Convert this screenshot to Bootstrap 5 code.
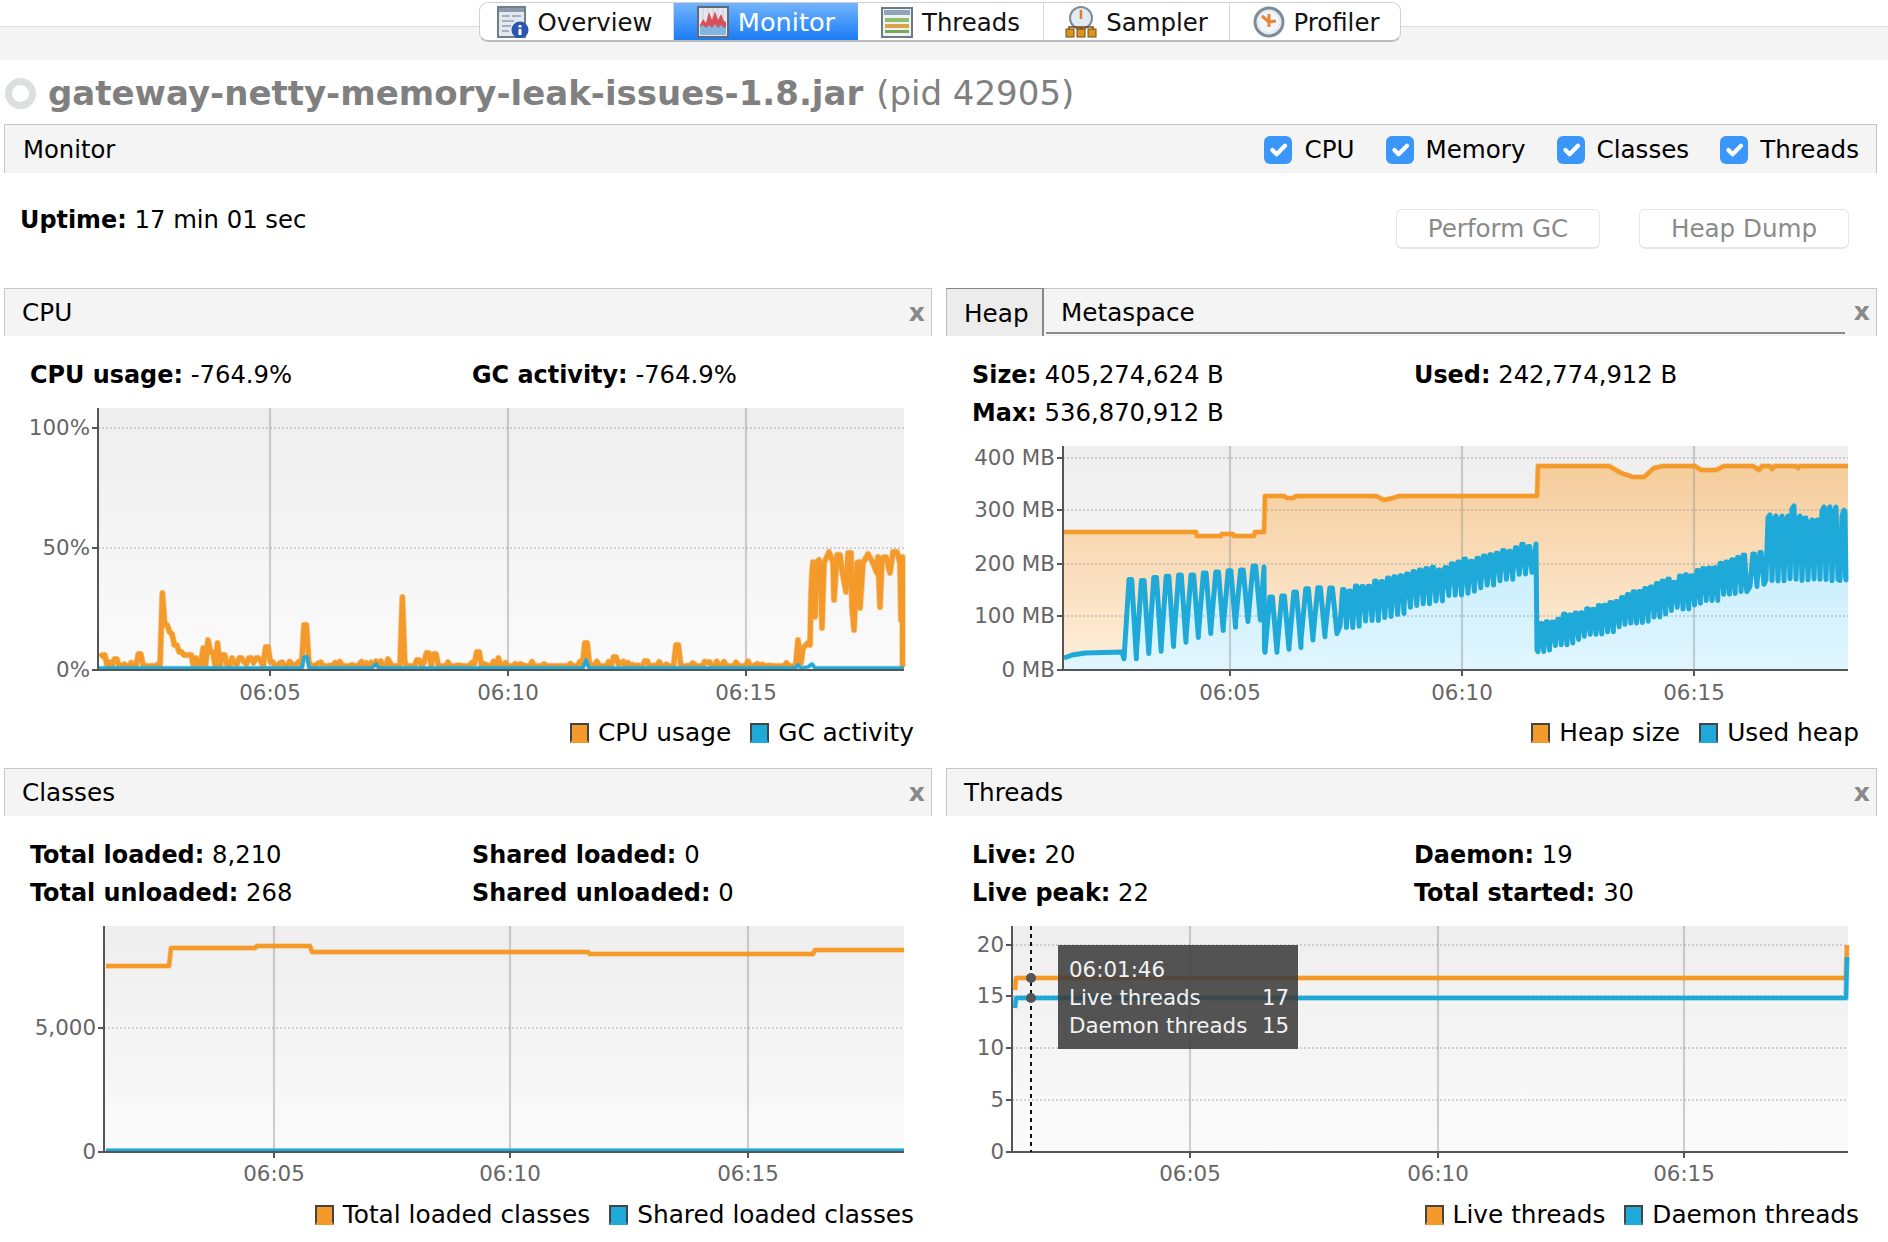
<!DOCTYPE html>
<html lang="en">
<head>
<meta charset="utf-8">
<title>VisualVM Monitor</title>
<link href="https://cdn.jsdelivr.net/npm/bootstrap@5.3.0/dist/css/bootstrap.min.css" rel="stylesheet">
<style>
html,body{height:100%}
body{font-family:"DejaVu Sans","Liberation Sans",sans-serif;font-size:24.3px;color:#000;background:#fff;overflow:hidden}
.strip{height:60px;padding-right:8px;background:linear-gradient(#fff 26px,#dcdcdc 26px,#dcdcdc 27px,#f4f4f4 27px)}
.strip-tabs{display:grid;grid-template-columns:194px 184px 186px 186px 172px;width:922px;height:40px;margin-top:2px;background:#fff;border:1px solid #d0d0d0;border-bottom:2px solid #bcbcbc;border-radius:9px;overflow:hidden}
.strip-tab{display:flex;align-items:center;justify-content:center;gap:9px;border-right:1px solid #d8d8d8;font-size:24.4px;line-height:1;color:#111;white-space:nowrap;padding-top:3px}
.strip-tab.first{padding-right:4px}
.strip-tab svg{margin-top:-3px}
.strip-tab:last-child{border-right:0}
.strip-tab.on{background:linear-gradient(#72b4fd,#1a7cf6);color:#fff;border-right:0}
.strip-tab.on span{font-size:25.6px}
.app-title{height:64px;color:#808080;font-size:34px;white-space:nowrap;padding:2px 0 0 5px}
.app-title .pid{margin-left:13px}
.ring{width:31px;height:31px;border-radius:50%;border:7px solid #dcdedf;background:#fff;margin-right:12px;flex:none}
.mon-head{height:49px;margin:0 11px 0 4px;background:#f4f4f4;border:1px solid #c6c6c6;border-bottom:0;padding:2px 17px 0 18px}
.mon-checks{margin-top:1px}
.mon-check{gap:12px;margin:0 0 0 31px;padding:0;font-size:24.6px;min-height:0}
.mon-check .form-check-input{--bs-form-check-bg-image:url("data:image/svg+xml,%3csvg xmlns='http://www.w3.org/2000/svg' viewBox='0 0 28 28'%3e%3cpath fill='none' stroke='%23fff' stroke-width='2' d='M9.5 15l3.5 6 5-14'/%3e%3c/svg%3e");width:28px;height:28px;margin:0;float:none;border:0;border-radius:6px;background-color:#3a97f9;background-size:28px;opacity:1}
.uptime{height:115px;padding:26px 39px 0 20px}
.uptime-text{margin-top:3px}
.uptime-text b{font-size:23.9px}
.act-wrap{margin-top:10px;gap:39px}
.act-btn{width:204px;height:40px;padding:2px 0 0;font-size:24.6px;line-height:1;color:#8a8a8a;background:#fff;border:1px solid #e6e6e6;border-bottom:2px solid #e2e2e2;border-radius:6px}
.act-btn.wide{width:210px}
.act-btn:disabled{color:#8a8a8a;background:#fff;border-color:#e6e6e6;opacity:1}
.panels{display:grid;grid-template-columns:928px 931px;grid-template-rows:480px 474px;column-gap:14px;padding-left:4px}
.pn-head{height:48px;background:#f4f4f4;border:1px solid #c6c6c6;border-bottom:0;padding:2px 6px 0 17px;line-height:1;font-size:24.7px}
.pn-x{color:#8a8a8a;font-weight:700;font-size:25px;line-height:1;margin-top:-3px}
.pn-tabs{padding:0 6px 0 0;align-items:stretch}
.pn-tab{display:flex;align-items:center;padding:3px 17px 0}
.pn-tab.sel{width:98px;margin-left:-1px;background:#ececec;border-left:1px solid #bbb;border-right:2px solid #888;border-top:1px solid #888;margin-top:-1px}
.pn-fill{border-bottom:2px solid #8c8c8c;margin:0 0 2px 2px;padding:6px 15px 0}
.pn-x-wrap{display:flex;align-items:center;padding-left:9px}
.stats{padding:20px 0 0 26px;display:grid;grid-template-columns:442px 1fr;line-height:38px;white-space:nowrap}
.stats b{font-weight:700;font-size:23.9px}
.plot{display:block}
.legend{height:46px;padding-right:18px;gap:19px;white-space:nowrap;font-size:24.8px}
.legend-item{gap:9px}
.sw{width:19px;height:20px;border:2px solid #444;border-bottom-width:3px;flex:none}
.sw.o{background:#f39a2b;border-bottom-color:#f39a2b}
.sw.b{background:#1fa9d9;border-bottom-color:#1fa9d9}
.plot text{font-family:"DejaVu Sans","Liberation Sans",sans-serif;font-size:21.4px}
</style>
</head>
<body>
<div class="strip d-flex justify-content-center">
  <div class="strip-tabs">
    <div class="strip-tab first">
      <svg width="32" height="32" viewBox="0 0 32 32"><rect x="1" y="1" width="27" height="30" fill="#e3e9ef" stroke="#6f7f8e" stroke-width="2"/><rect x="2" y="2" width="25" height="4" fill="#8a9bab"/><path d="M5 10h8M15 10h9M5 15h12M5 20h9M5 25h7" stroke="#a3b2c0" stroke-width="2"/><circle cx="23" cy="24" r="8.5" fill="#2a55b0"/><rect x="21.5" y="23" width="3" height="6" fill="#fff"/><rect x="21.5" y="19" width="3" height="2.5" fill="#fff"/></svg>
      <span>Overview</span>
    </div>
    <div class="strip-tab on">
      <svg width="32" height="32" viewBox="0 0 32 32"><rect x="1" y="1" width="30" height="30" fill="#e4e7ec" stroke="#5d6c7c" stroke-width="2"/><path d="M6 2v28M11 2v28M16 2v28M21 2v28M26 2v28" stroke="#c8ced6"/><path d="M3 19l3-6 3 4 3-11 3 8 3-9 3 9 3-6 3 7 2 1v6H3z" fill="#d8515a"/><path d="M3 29v-8l3-2 3 3 3-3 3 3 3-4 3 4 3-3 3 3 2-1v8z" fill="#7fb6e2"/></svg>
      <span>Monitor</span>
    </div>
    <div class="strip-tab">
      <svg width="32" height="32" viewBox="0 0 32 32"><rect x="1" y="2" width="30" height="29" fill="#eef2f5" stroke="#6b7a88" stroke-width="2"/><rect x="3" y="4" width="26" height="5" fill="#8fa4b8"/><rect x="4" y="12" width="24" height="4" fill="#8bbf6a"/><rect x="4" y="18" width="24" height="4" fill="#d9a441"/><rect x="4" y="24" width="24" height="3" fill="#7ba65a"/></svg>
      <span>Threads</span>
    </div>
    <div class="strip-tab">
      <svg width="32" height="32" viewBox="0 0 32 32"><circle cx="16" cy="12" r="11" fill="#e3ebf2" stroke="#7f8c98" stroke-width="2"/><path d="M16 4v9" stroke="#e07b32" stroke-width="2.5"/><path d="M4 24v-3h24v3M16 21v3" fill="none" stroke="#7a4a10" stroke-width="1.5"/><rect x="1" y="23" width="8" height="8" fill="#d8951f" stroke="#7a4a10"/><rect x="12" y="23" width="8" height="8" fill="#d8951f" stroke="#7a4a10"/><rect x="23" y="23" width="8" height="8" fill="#d8951f" stroke="#7a4a10"/></svg>
      <span>Sampler</span>
    </div>
    <div class="strip-tab">
      <svg width="32" height="32" viewBox="0 0 32 32"><circle cx="16" cy="16" r="14" fill="#e4edf5" stroke="#7f8c98" stroke-width="3"/><circle cx="16" cy="16" r="10" fill="#f2f6fa"/><path d="M9 10l7 6M16 8v8l7-1M16 16v5" fill="none" stroke="#e8833a" stroke-width="3"/></svg>
      <span>Profiler</span>
    </div>
  </div>
</div>

<div class="app-title d-flex align-items-center">
  <span class="ring"></span><b>gateway-netty-memory-leak-issues-1.8.jar</b><span class="pid">(pid 42905)</span>
</div>

<div class="mon-head d-flex align-items-center justify-content-between">
  <span>Monitor</span>
  <div class="mon-checks d-flex align-items-center">
    <label class="form-check mon-check d-flex align-items-center"><input class="form-check-input" type="checkbox" checked><span>CPU</span></label>
    <label class="form-check mon-check d-flex align-items-center"><input class="form-check-input" type="checkbox" checked><span>Memory</span></label>
    <label class="form-check mon-check d-flex align-items-center"><input class="form-check-input" type="checkbox" checked><span>Classes</span></label>
    <label class="form-check mon-check d-flex align-items-center"><input class="form-check-input" type="checkbox" checked><span>Threads</span></label>
  </div>
</div>

<div class="uptime d-flex justify-content-between align-items-start">
  <div class="uptime-text"><b>Uptime:</b> 17 min 01 sec</div>
  <div class="d-flex act-wrap">
    <button class="btn act-btn" type="button" disabled>Perform GC</button>
    <button class="btn act-btn wide" type="button" disabled>Heap Dump</button>
  </div>
</div>

<div class="panels">
  <section>
    <div class="pn-head d-flex align-items-center justify-content-between"><span>CPU</span><span class="pn-x">x</span></div>
    <div class="stats"><div><b>CPU usage:</b> -764.9%</div><div><b>GC activity:</b> -764.9%</div></div>
    <svg class="plot" id="c1"></svg>
    <div class="legend d-flex justify-content-end align-items-center">
      <div class="legend-item d-flex align-items-center"><i class="sw o"></i><span>CPU usage</span></div>
      <div class="legend-item d-flex align-items-center"><i class="sw b"></i><span>GC activity</span></div>
    </div>
  </section>
  <section>
    <div class="pn-head pn-tabs d-flex">
      <div class="pn-tab sel">Heap</div>
      <div class="pn-tab pn-fill flex-grow-1">Metaspace</div>
      <div class="pn-x-wrap"><span class="pn-x">x</span></div>
    </div>
    <div class="stats"><div><b>Size:</b> 405,274,624 B</div><div><b>Used:</b> 242,774,912 B</div><div><b>Max:</b> 536,870,912 B</div></div>
    <svg class="plot" id="c2"></svg>
    <div class="legend d-flex justify-content-end align-items-center">
      <div class="legend-item d-flex align-items-center"><i class="sw o"></i><span>Heap size</span></div>
      <div class="legend-item d-flex align-items-center"><i class="sw b"></i><span>Used heap</span></div>
    </div>
  </section>
  <section>
    <div class="pn-head d-flex align-items-center justify-content-between"><span>Classes</span><span class="pn-x">x</span></div>
    <div class="stats"><div><b>Total loaded:</b> 8,210</div><div><b>Shared loaded:</b> 0</div><div><b>Total unloaded:</b> 268</div><div><b>Shared unloaded:</b> 0</div></div>
    <svg class="plot" id="c3"></svg>
    <div class="legend d-flex justify-content-end align-items-center">
      <div class="legend-item d-flex align-items-center"><i class="sw o"></i><span>Total loaded classes</span></div>
      <div class="legend-item d-flex align-items-center"><i class="sw b"></i><span>Shared loaded classes</span></div>
    </div>
  </section>
  <section>
    <div class="pn-head d-flex align-items-center justify-content-between"><span>Threads</span><span class="pn-x">x</span></div>
    <div class="stats"><div><b>Live:</b> 20</div><div><b>Daemon:</b> 19</div><div><b>Live peak:</b> 22</div><div><b>Total started:</b> 30</div></div>
    <svg class="plot" id="c4"></svg>
    <div class="legend d-flex justify-content-end align-items-center">
      <div class="legend-item d-flex align-items-center"><i class="sw o"></i><span>Live threads</span></div>
      <div class="legend-item d-flex align-items-center"><i class="sw b"></i><span>Daemon threads</span></div>
    </div>
  </section>
</div>

<script src="https://cdn.jsdelivr.net/npm/bootstrap@5.3.0/dist/js/bootstrap.bundle.min.js"></script>
<script>
var O='#f39a2b',B='#1fa9d9';
var seed=7;function R(){seed=(seed*16807)%2147483647;return seed/2147483647;}
function P(a){return a.map(function(p){return p[0].toFixed(1)+','+p[1].toFixed(1)}).join(' ');}
function line(a,c,w){
  return '<polyline points="'+P(a)+'" fill="none" stroke="'+c+'" stroke-opacity=".45" stroke-width="'+(w+1.5)+'" stroke-linejoin="round"/>'+
         '<polyline points="'+P(a)+'" fill="none" stroke="'+c+'" stroke-width="'+w+'" stroke-linejoin="round"/>';
}
function area(a,base,g){
  var s=a.slice();s.push([a[a.length-1][0],base]);s.push([a[0][0],base]);
  return '<polygon points="'+P(s)+'" fill="url(#'+g+')"/>';
}
function defs(id){
  return '<defs><linearGradient id="bg'+id+'" x1="0" y1="0" x2="0" y2="1"><stop offset="0" stop-color="#eeeeee"/><stop offset="1" stop-color="#fbfbfb"/></linearGradient>'+
  '<linearGradient id="fo'+id+'" x1="0" y1="0" x2="0" y2="1"><stop offset="0" stop-color="#f5cd9c"/><stop offset="1" stop-color="#feeedb"/></linearGradient>'+
  '<linearGradient id="fb'+id+'" x1="0" y1="0" x2="0" y2="1"><stop offset="0" stop-color="#bfeafb"/><stop offset="1" stop-color="#e0f6ff"/></linearGradient></defs>';
}
function build(id,cfg){
  var s=document.getElementById(id),x0=cfg.vb[0],y0=cfg.vb[1],w=cfg.vb[2],h=cfg.vb[3];
  s.setAttribute('viewBox',x0+' '+y0+' '+w+' '+h);s.setAttribute('width',w);s.setAttribute('height',h);
  var L=cfg.left,Rr=904+(id=='c2'||id=='c4'?944:0),T=cfg.top,Bt=cfg.bottom,o=defs(id),ly=cfg.lab||22;
  o+='<rect x="'+L+'" y="'+T+'" width="'+(Rr-L)+'" height="'+(Bt-T)+'" fill="url(#bg'+id+')"/>';
  o+=cfg.under||'';
  cfg.xt.forEach(function(t){
    o+='<line x1="'+t[0]+'" x2="'+t[0]+'" y1="'+T+'" y2="'+Bt+'" stroke="#9a9a9a" stroke-opacity=".45" stroke-width="2.2"/>';
    o+='<line x1="'+t[0]+'" x2="'+t[0]+'" y1="'+Bt+'" y2="'+(Bt+6)+'" stroke="#555" stroke-width="2"/>';
    o+='<text x="'+t[0]+'" y="'+(Bt+ly)+'" dominant-baseline="central" text-anchor="middle" fill="#666">'+t[1]+'</text>';
  });
  cfg.yt.forEach(function(t){
    if(t[0]!=Bt)o+='<line x1="'+L+'" x2="'+Rr+'" y1="'+t[0]+'" y2="'+t[0]+'" stroke="#8a8a8a" stroke-opacity=".33" stroke-width="2" stroke-dasharray="2 2"/>';
    o+='<line x1="'+(L-6)+'" x2="'+L+'" y1="'+t[0]+'" y2="'+t[0]+'" stroke="#555" stroke-width="2"/>';
    o+='<text x="'+(L-8)+'" y="'+(t[0]-1)+'" dominant-baseline="central" text-anchor="end" fill="#666">'+t[1]+'</text>';
  });
  o+=cfg.over||'';
  o+='<line x1="'+L+'" x2="'+L+'" y1="'+T+'" y2="'+(Bt+1)+'" stroke="#555" stroke-width="2"/>';
  o+='<line x1="'+L+'" x2="'+Rr+'" y1="'+Bt+'" y2="'+Bt+'" stroke="#555" stroke-width="2"/>';
  o+=cfg.top2||'';
  s.innerHTML=o;
}

/* CPU */
var peaks={100:657,104:655,115:659,140:654,164:593,166:625,170:632,173:634,176:645,180:652,186:655,190:655,196:658,203:648,210:640,212:652,218:643,224:655,232:658,240:658,250:658,258:658,267:647,272:662,305:625,402:597,428:653,434:654,478:652,586:643,614:657,646:661,677:645,381:661,388:659,418:660,498:658};
var cpu=[];
for(var x=100;x<=796;x+=2.4){
  var v=666-(R()<.45?R()*5:0),best=null;
  for(var p in peaks){if(Math.abs(p-x)<2){best=peaks[p];}}
  if(best)v=best;
  cpu.push([x,v]);
}
cpu=cpu.concat([[796,662],[798,640],[801,663],[803,648],[808,643],[810,645],[811,597],[812,573],[813,562],[815,617],[817,562],[819,560],[821,590],[822,628],[824,563],[829,552],[833,562],[834,600],[837,555],[840,555],[842,570],[846,592],[848,553],[851,553],[852,607],[854,630],[857,563],[859,562],[860,608],[863,563],[868,554],[873,563],[877,573],[878,557],[880,607],[882,558],[886,557],[890,573],[893,552],[897,552],[900,563],[901,620],[902.5,557],[902.5,667]]);
var gc=[[99,668],[302,668],[304,657],[307,657],[309,668],[372,668],[376,664],[379,668],[583,668],[586,660],[589,668],[795,668],[798,665],[801,668],[808,667],[812,664],[815,668],[904,668]];
build('c1',{vb:[4,394,928,316],left:98,top:408,bottom:670,
  xt:[[270,'06:05'],[508,'06:10'],[746,'06:15']],
  yt:[[428,'100%'],[548,'50%'],[670,'0%']],
  over:line(cpu,O,5)+line(gc,B,3)});

/* Heap */
var hs=[[1064,532],[1196,532],[1197,536],[1221,536],[1222,534],[1233,534],[1234,536],[1254,536],[1255,532],[1264,532],[1265,496],[1284,496],[1287,498],[1293,498],[1296,496],[1376,496],[1384,500],[1393,498],[1399,496],[1537,496],[1538,466],[1609,466],[1621,473],[1633,477],[1644,477],[1654,468],[1663,466],[1695,466],[1701,470],[1716,470],[1724,466],[1753,466],[1759,470],[1762,466],[1770,466],[1772,469],[1775,466],[1796,466],[1798,468],[1800,466],[1848,466]];
var us=[[1064,658],[1072,655],[1085,653],[1122,652]];
function saw(a,b,per,l0,l1,h0,h1,j){
  for(var x=a;x+per<=b+.1;x+=per){
    var t=(x-a)/(b-a),lo=l0+(l1-l0)*t+R()*j,hi=h0+(h1-h0)*t-R()*j;
    us.push([x,lo]);us.push([x+per*.4,hi]);us.push([x+per*.62,hi]);us.push([x+per,lo]);
  }
}
saw(1124,1262,12.4,657,613,582,567,3);
us.push([1264,567]);us.push([1264.5,650]);
saw(1265,1340,12,652,627,600,585,4);
saw(1340,1535,6.4,625,566,594,546,6);
us.push([1536,544]);us.push([1537,650]);
saw(1538,1750,5.8,648,583,627,557,6);
saw(1750,1768,7,585,582,555,552,2);
var hi=[[1769,515],[1775,516],[1781,516],[1787,516],[1793,506],[1799,516],[1805,518],[1811,520],[1817,520],[1823,507],[1829,507],[1835,507],[1843,510]];
hi.forEach(function(p){us.push([p[0]-3,578+R()*3]);us.push([p[0]-1,p[1]+R()*6]);us.push([p[0]+1,p[1]]);us.push([p[0]+3,578+R()*3]);});
us.push([1845,512]);us.push([1845.5,578]);
var usFill=us.slice();usFill.push([1848,578]);
build('c2',{vb:[946,432,931,278],left:1063,top:446,bottom:670,
  xt:[[1230,'06:05'],[1462,'06:10'],[1694,'06:15']],
  yt:[[458,'400 MB'],[510,'300 MB'],[564,'200 MB'],[616,'100 MB'],[670,'0 MB']],
  under:area(hs,670,'foc2')+area(usFill,670,'fbc2'),
  over:line(hs,O,4)+'<polyline points="'+P(us)+'" fill="none" stroke="'+B+'" stroke-width="5" stroke-linejoin="round"/>'});

/* Classes */
var tl=[[106,966],[169,966],[171,948],[255,948],[257,946],[310,946],[312,952],[588,952],[590,954],[813,954],[815,950],[904,950]];
build('c3',{vb:[4,912,928,280],left:104,top:926,bottom:1152,lab:21,
  xt:[[274,'06:05'],[510,'06:10'],[748,'06:15']],
  yt:[[1028,'5,000'],[1152,'0']],
  over:line(tl,O,4)+line([[106,1150],[904,1150]],B,2.5)});

/* Threads */
var lv=[[1015,990],[1016,978],[1846,978],[1847,945]],dm=[[1015,1008],[1016,998],[1846,998],[1847,957]];
build('c4',{vb:[946,912,931,280],left:1012,top:926,bottom:1152,lab:21,
  xt:[[1190,'06:05'],[1438,'06:10'],[1684,'06:15']],
  yt:[[945,'20'],[996,'15'],[1048,'10'],[1100,'5'],[1152,'0']],
  over:line(lv,O,4)+line(dm,B,4),
  top2:'<line x1="1031" x2="1031" y1="926" y2="1152" stroke="#111" stroke-width="2" stroke-dasharray="4 4"/>'+
  '<circle cx="1031" cy="978" r="5" fill="#555"/><circle cx="1031" cy="998" r="5" fill="#555"/>'+
  '<rect x="1058" y="945" width="240" height="104" fill="#3c3c3c" fill-opacity=".88"/>'+
  '<text x="1069" y="969.5" dominant-baseline="central" fill="#f2f2f2">06:01:46</text>'+
  '<text x="1069" y="997.5" dominant-baseline="central" fill="#f2f2f2">Live threads</text>'+
  '<text x="1262" y="997.5" dominant-baseline="central" fill="#f2f2f2">17</text>'+
  '<text x="1069" y="1025.5" dominant-baseline="central" fill="#f2f2f2">Daemon threads</text>'+
  '<text x="1262" y="1025.5" dominant-baseline="central" fill="#f2f2f2">15</text>'});
</script>
</body>
</html>
